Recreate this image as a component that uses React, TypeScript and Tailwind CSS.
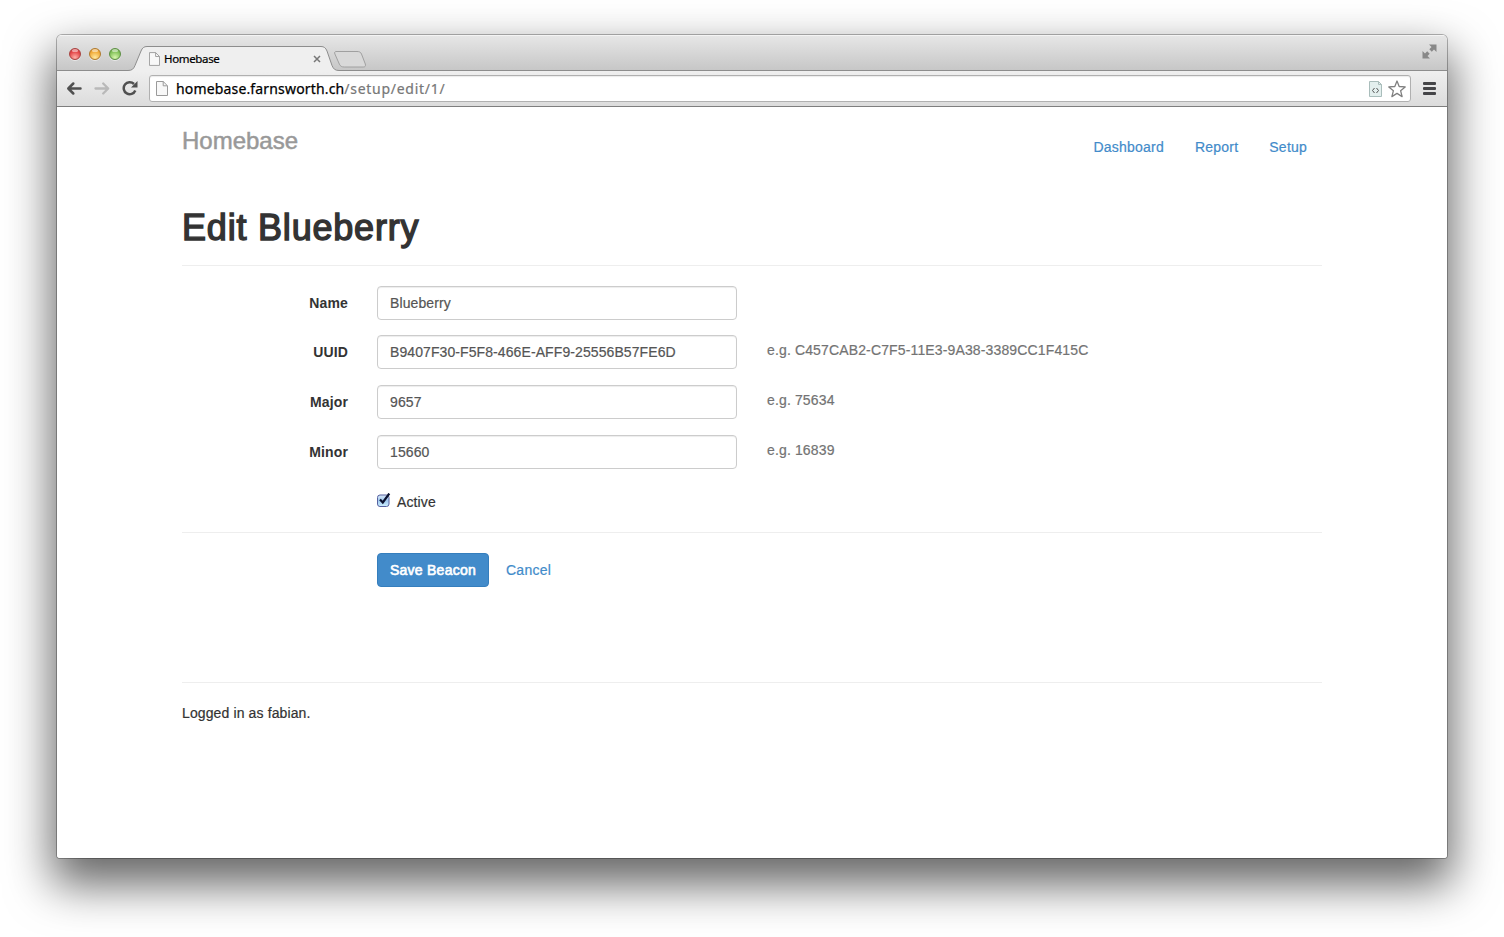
import React from 'react';

const PAGE_FONT = "font-['Liberation_Sans',Arial,sans-serif]";
const CHROME_FONT = "font-['Noto_Sans','Open_Sans',sans-serif]";

function Light({ className }: { className: string }) {
  return (
    <span
      className={`relative block h-3 w-3 overflow-hidden rounded-full border shadow-[0_1px_0_rgba(255,255,255,0.5)] ${className}`}
    >
      <span className="absolute left-[2px] top-0 h-[3px] w-[6px] rounded-full bg-white/50" />
    </span>
  );
}

function PageIcon({ className }: { className: string }) {
  return (
    <svg className={className} viewBox="0 0 12 15" fill="none">
      <path d="M.5.5h6.700l4.300 4.300v9.700H.5z" fill="#f8f8f8" stroke="#9a9a9a" />
      <path d="M7.200.5v4.300h4.300" stroke="#9a9a9a" />
    </svg>
  );
}

function TabStrip() {
  return (
    <div className="relative flex h-9 items-start bg-gradient-to-b from-[#e7e7e7] to-[#c6c6c6] shadow-[inset_0_1px_0_#f4f4f4]">
      <div className="relative z-10 flex gap-2 pl-3 pt-[13px]">
        <Light className="border-[#a8423f] bg-[radial-gradient(circle_at_50%_85%,#ffb0a8,#e4484a_60%,#c93238)]" />
        <Light className="border-[#b07a2c] bg-[radial-gradient(circle_at_50%_85%,#ffe9a0,#f2ad3c_60%,#d98d24)]" />
        <Light className="border-[#5c8f42] bg-[radial-gradient(circle_at_50%_85%,#d8f7ae,#85c35c_60%,#5fa03d)]" />
      </div>
      <svg className="absolute left-0 top-0 h-9 w-full" fill="none">
        <path d="M0 35.500H71c4 0 5.500-1.500 7-5l6-14.500c1.300-3.200 3-4.500 6-4.500H264c3 0 4.700 1.300 6 4.500l5 14.500c1.500 3.500 3 5 7 5H1390V37H0z" fill="#efefef" />
        <path d="M0 35.500H71c4 0 5.500-1.500 7-5l6-14.500c1.300-3.200 3-4.500 6-4.500H264c3 0 4.700 1.300 6 4.500l5 14.500c1.500 3.500 3 5 7 5H1390" stroke="#8d8d8d" />
        <path d="M279 16.500h21c2.500 0 3.700.7 4.500 2.500l3.800 10c.6 2-.2 3-2 3h-19c-2.500 0-4-.8-4.900-2.800l-4.500-10.200c-.7-1.700 0-2.500 1.100-2.500z" fill="#d9d9d9" stroke="#a0a0a0" />
      </svg>
      <div className={`relative ml-7 mt-4 flex h-4 w-[172px] items-center ${CHROME_FONT}`}>
        <PageIcon className="h-[14px] w-[11px]" />
        <span className="ml-1 text-[11.5px] leading-4 tracking-[-0.35px] text-black [-webkit-text-stroke:0.2px_#000]">Homebase</span>
        <svg className="ml-auto h-2 w-2" viewBox="0 0 8 8">
          <path d="M1 1l6 6M7 1L1 7" stroke="#777" strokeWidth="1.5" />
        </svg>
      </div>
      <svg className="relative ml-auto mr-[10px] mt-[9px] h-[15px] w-[15px]" viewBox="0 0 15 15" fill="#888">
        <path d="M7 .5h7.500V8L12 5.500 9.800 7.700 7.300 5.200 9.500 3z" />
        <path d="M.5 7l2.500 2.500 2.200-2.200 2.500 2.500L5.500 12 8 14.500H.5z" />
      </svg>
    </div>
  );
}

function Toolbar() {
  return (
    <div className="flex h-9 items-start border-b border-[#7e7e7e] bg-gradient-to-b from-[#efefef] to-[#dcdcdc] pl-[9px] pr-[11px]">
      <svg className="mt-[10px] h-[15px] w-4" viewBox="0 0 16 15" fill="none" stroke="#505050" strokeWidth="2.500" strokeLinecap="round" strokeLinejoin="round">
        <path d="M14.500 7.500H2.500M7.300 2.500l-5 5 5 5" />
      </svg>
      <svg className="ml-3 mt-[10px] h-[15px] w-4" viewBox="0 0 16 15" fill="none" stroke="#b9b9b9" strokeWidth="2.300" strokeLinecap="round" strokeLinejoin="round">
        <path d="M1.500 7.500h12M9.200 2.500l5 5-5 5" />
      </svg>
      <svg className="ml-3 mt-[9px] h-4 w-4" viewBox="0 0 16 16" fill="none">
        <path d="M13.300 10.500A6 6 0 1 1 12 4" stroke="#505050" strokeWidth="2.500" />
        <path d="M15.500 1v6.500H9z" fill="#505050" />
      </svg>
      <div className={`ml-[11px] mt-1 flex h-[27px] flex-1 items-center rounded-[3px] border border-[#b0b0b0] bg-white pl-[6px] pr-[4px] shadow-[inset_0_1px_1px_rgba(0,0,0,0.08)] ${CHROME_FONT}`}>
        <PageIcon className="h-[15px] w-3" />
        <span className="ml-2 text-[14px] leading-5 tracking-[0.16px] text-black [-webkit-text-stroke:0.25px_#000]">
          homebase.farnsworth.ch<span className="tracking-[0.72px] text-[#777] [-webkit-text-stroke:0.2px_#777]">/setup/edit/1/</span>
        </span>
        <svg className="ml-auto h-4 w-[13px]" viewBox="0 0 13 16" fill="none">
          <path d="M.5.5h9l3 3v12H.5z" fill="#e3efee" stroke="#a9bdbb" />
          <path d="M9.500.5v3h3" stroke="#a9bdbb" />
          <path d="M5.500 7l-2 2.500 2 2.500M7.500 7l2 2.500-2 2.500" stroke="#555" />
        </svg>
        <svg className="ml-[6px] h-[18px] w-[18px]" viewBox="0 0 18 18" fill="none">
          <path d="M9 1l2.200 5.500 6 .4-4.600 3.800 1.500 5.900L9 13.400l-5.100 3.200 1.500-5.900L.8 6.900l6-.4z" stroke="#808080" strokeWidth="1.300" strokeLinejoin="round" />
        </svg>
      </div>
      <svg className="ml-3 mt-[11px] h-[13px] w-[13px]" viewBox="0 0 13 13" fill="#454548">
        <rect width="13" height="3" rx="1" />
        <rect y="5" width="13" height="3" rx="1" />
        <rect y="10" width="13" height="3" rx="1" />
      </svg>
    </div>
  );
}

function Field({ label, value, hint, className }: { label: string; value: string; hint?: string; className: string }) {
  return (
    <div className={`flex h-[34px] ${className}`}>
      <label className="w-[166px] pt-[7px] text-right font-bold tracking-[0.15px] [-webkit-text-stroke:0]">{label}</label>
      <input
        type="text"
        defaultValue={value}
        className="ml-[29px] h-[34px] w-[360px] rounded-[4px] border border-[#ccc] bg-white px-3 text-[14px] tracking-[0.09px] text-[#555] shadow-[inset_0_1px_1px_rgba(0,0,0,0.075)] outline-none [-webkit-text-stroke:0.2px_#555]"
      />
      {hint && <span className="ml-[30px] pt-[5px] tracking-[0.14px] text-[#737373]">{hint}</span>}
    </div>
  );
}

export default function App() {
  return (
    <div className="h-[937px] w-[1504px] overflow-hidden bg-white pl-[57px] pt-[35px]">
      <div className="flex h-[823px] w-[1390px] flex-col rounded-[5px] rounded-b-[3px] shadow-[0_0_0_1px_rgba(0,0,0,0.28),0_22px_46px_5px_rgba(0,0,0,0.6)]">
        <div className="overflow-hidden rounded-t-[5px]">
          <TabStrip />
          <Toolbar />
        </div>
        <div className={`flex-1 rounded-b-[3px] bg-white px-[125px] text-[14px] leading-5 tracking-[0.12px] text-[#333] [-webkit-text-stroke:0.2px_currentColor] ${PAGE_FONT}`}>
          <header className="flex h-[79px] justify-between pr-[15px] pt-5">
            <h3 className="pt-px text-[24px] leading-[26px] tracking-normal text-[#999] [-webkit-text-stroke:0.5px_#999]">Homebase</h3>
            <nav className="flex gap-[31px] pt-[10px] tracking-[0.22px] text-[#428bca]">
              <a>Dashboard</a>
              <a>Report</a>
              <a>Setup</a>
            </nav>
          </header>
          <h1 className="h-[80px] border-b border-[#eee] pt-[22px] text-[36px] leading-10 tracking-[0.8px] [-webkit-text-stroke:1.4px_#333]">
            Edit Blueberry
          </h1>
          <form className="pt-5">
            <Field label="Name" value="Blueberry" className="mb-[15px]" />
            <Field label="UUID" value="B9407F30-F5F8-466E-AFF9-25556B57FE6D" hint="e.g. C457CAB2-C7F5-11E3-9A38-3389CC1F415C" className="mb-4" />
            <Field label="Major" value="9657" hint="e.g. 75634" className="mb-4" />
            <Field label="Minor" value="15660" hint="e.g. 16839" className="mb-[23px]" />
            <label className="flex h-5 pl-[195px]">
              <svg className="mt-px h-[15px] w-[14px]" viewBox="0 0 14 15" fill="none">
                <defs>
                  <linearGradient id="box" x1="0" y1="0" x2="0" y2="1">
                    <stop offset="0" stopColor="#dbe9f8" />
                    <stop offset=".5" stopColor="#9fc8ef" />
                    <stop offset="1" stopColor="#cdf0ff" />
                  </linearGradient>
                </defs>
                <rect x=".5" y="2" width="11.500" height="11.500" rx="2.500" fill="url(#box)" stroke="#5661a0" />
                <path d="M3 6.500l2.800 3L12.300.5" stroke="#0b1230" strokeWidth="2.200" />
              </svg>
              <span className="ml-[6px]">Active</span>
            </label>
            <div className="mt-5 flex border-t border-[#eee] pl-[195px] pt-5">
              <button type="button" className="h-[34px] w-[112px] rounded-[4px] border border-[#357ebd] bg-[#428bca] text-[14px] tracking-[0.25px] text-white [-webkit-text-stroke:0.65px_#fff]">
                Save Beacon
              </button>
              <a className="ml-[17px] pt-[7px] tracking-[0.25px] text-[#428bca]">Cancel</a>
            </div>
          </form>
          <footer className="mt-[95px] border-t border-[#eee] pt-5">Logged in as fabian.</footer>
        </div>
      </div>
    </div>
  );
}
